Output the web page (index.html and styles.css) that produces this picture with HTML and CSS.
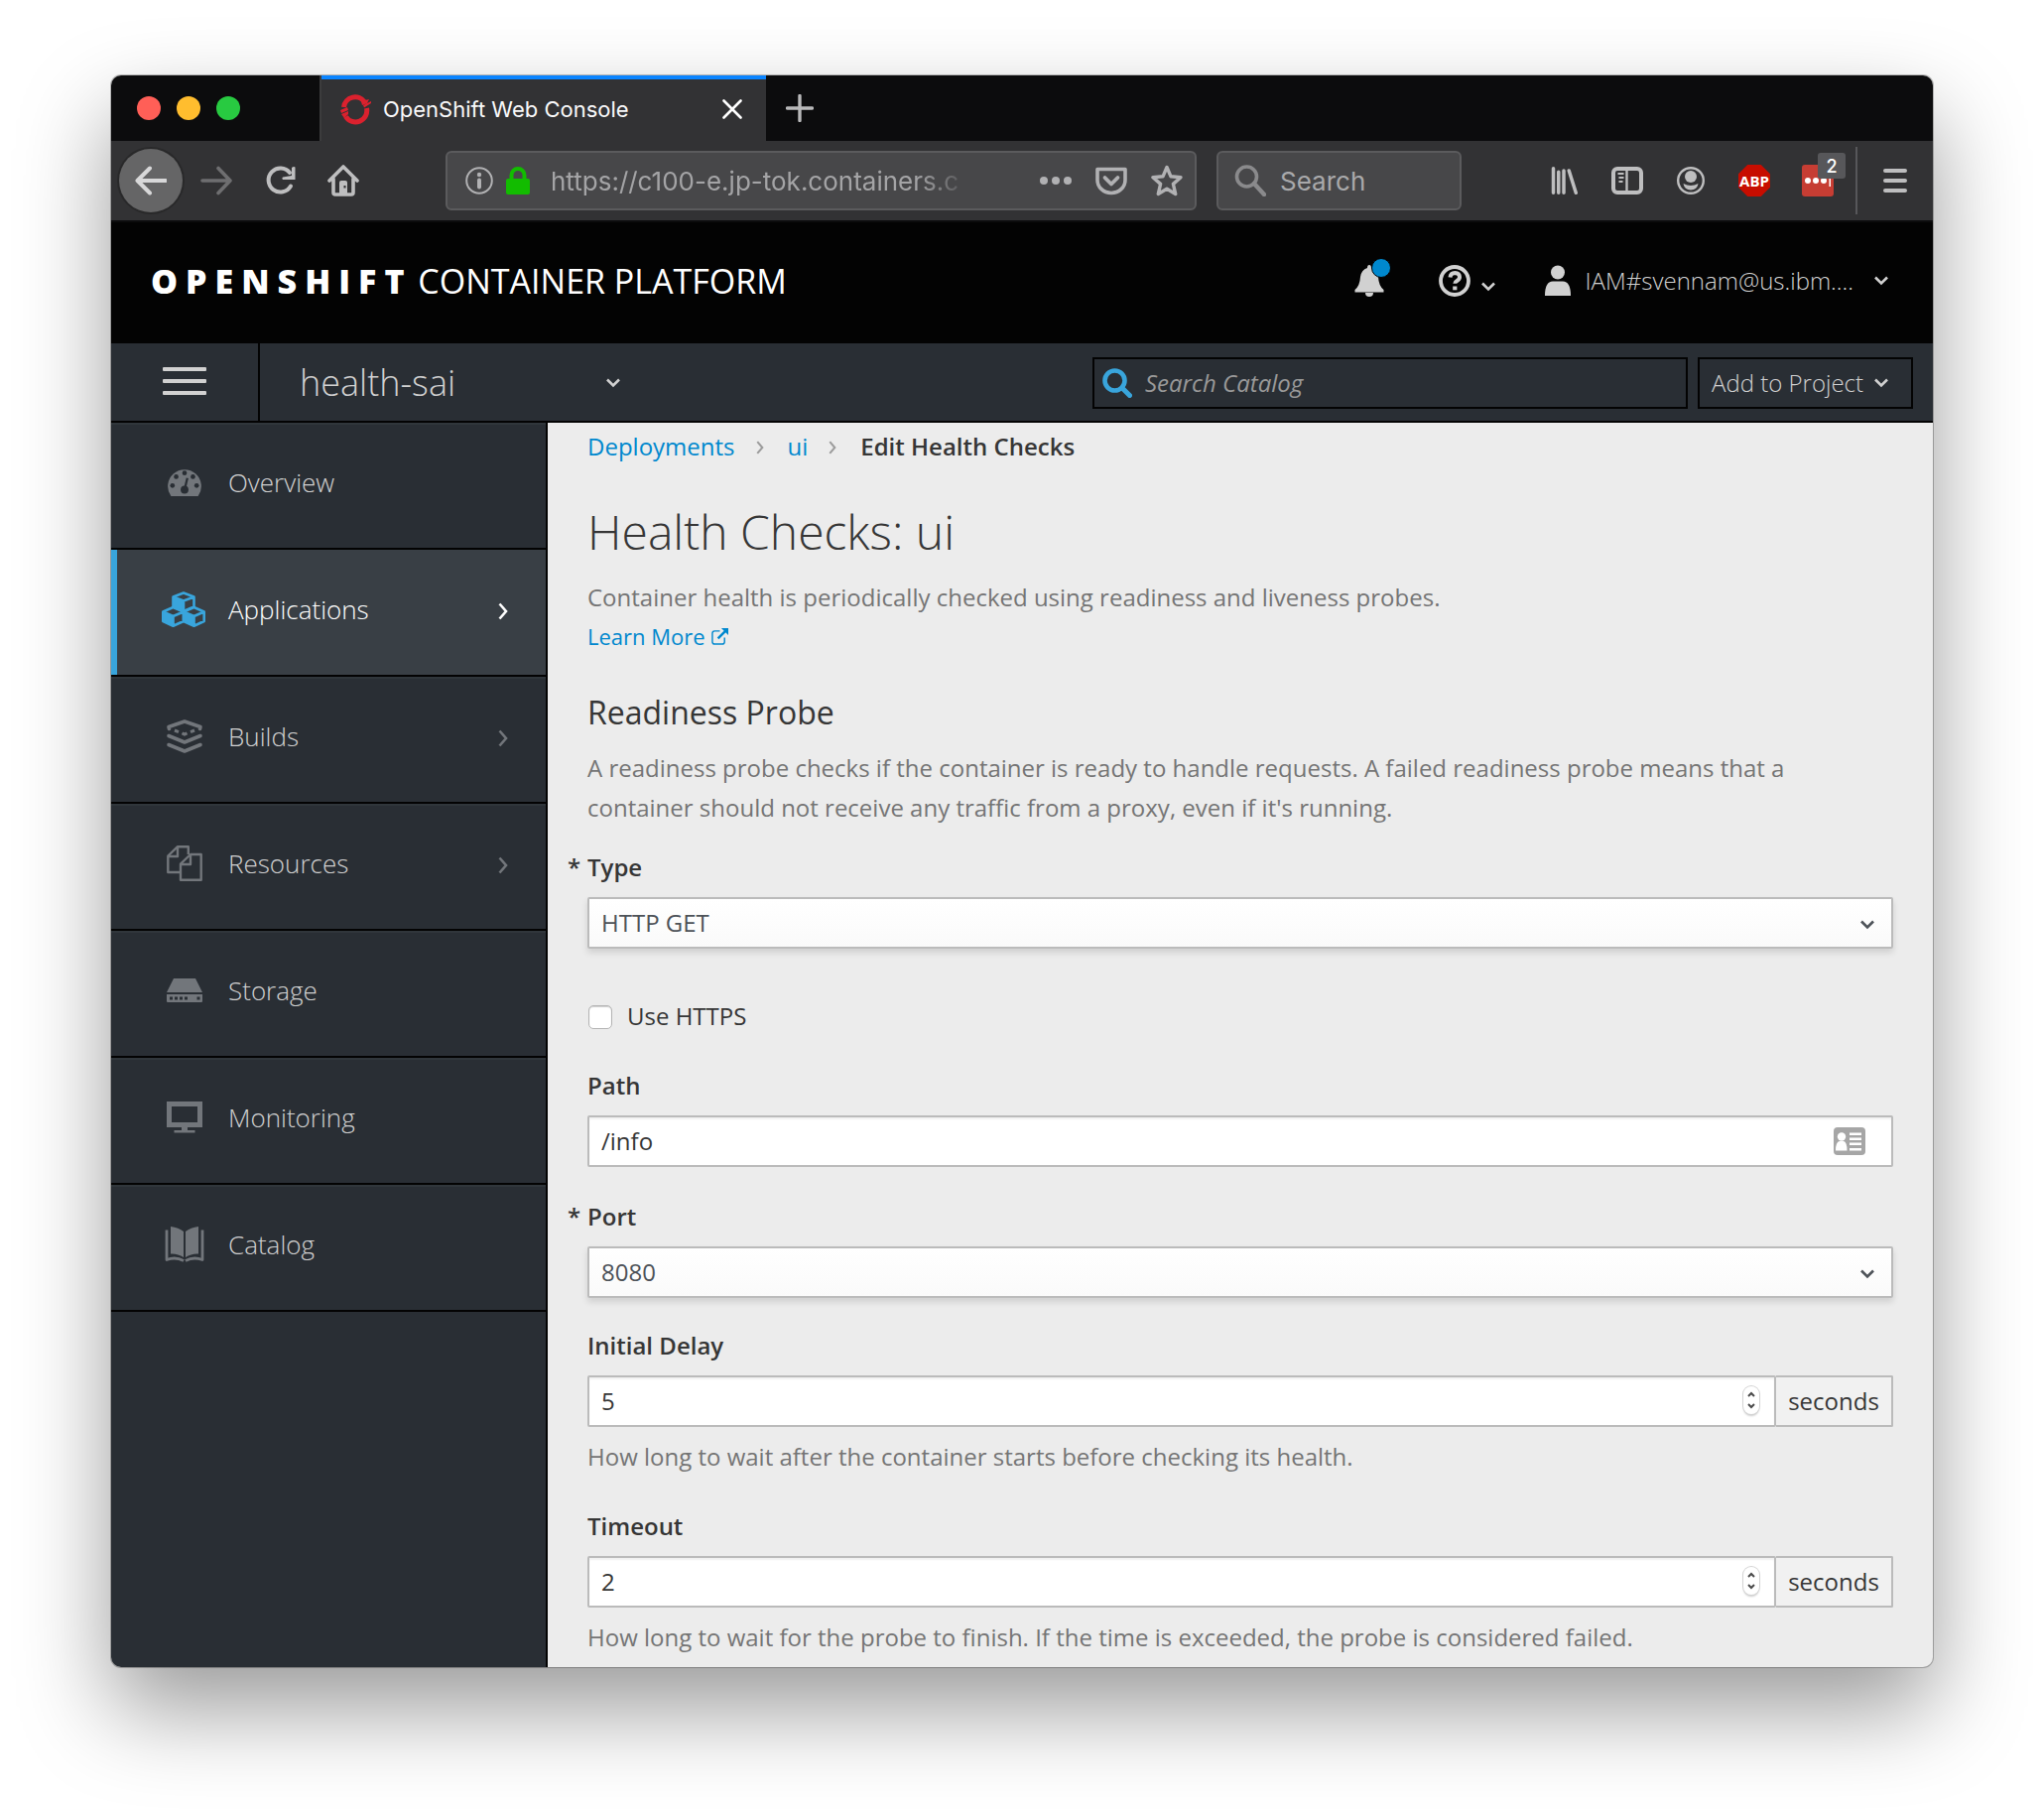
FILE: index.html
```html
<!DOCTYPE html>
<html lang="en">
<head>
<meta charset="utf-8">
<title>OpenShift Web Console</title>
<link rel="stylesheet" href="styles.css">
</head>
<body>
<svg class="sprite" aria-hidden="true">
  <symbol id="chev-down" viewBox="0 0 14 10"><path d="M1 1.500 7 7.500l6-6" fill="none" stroke="currentColor" stroke-width="2.600"/></symbol>
  <symbol id="chev-right" viewBox="0 0 10 18"><path d="M1.500 1.500 8 9l-6.500 7.500" fill="none" stroke="currentColor" stroke-width="2.600"/></symbol>
</svg>
<div class="window">
  <div class="tabbar">
    <div class="lights"><span class="light red"></span><span class="light yellow"></span><span class="light green"></span></div>
    <div class="tab">
      <svg class="i32" viewBox="0 0 32 32"><g fill="none" stroke="#db212e" stroke-width="5"><path d="M4.500 14A11.500 11.500 0 0 1 25.500 9"/><path d="M27.500 15A11.500 11.500 0 0 1 6.500 23.500"/></g><path d="M1 17l7-3 1 3-7 3zM24 12l8-4 0 2-7 4.500zM22 8l8-2-2 4-5 2zM2 21l7-3 0 3-4 4z" fill="#db212e"/></svg>
      <span class="tab-title">OpenShift Web Console</span>
      <button class="ico" aria-label="Close tab"><svg width="20" height="20" viewBox="0 0 20 20"><path d="M1.500 1.500l17 17M18.500 1.500l-17 17" stroke="#fff" stroke-width="2.600" stroke-linecap="round"/></svg></button>
    </div>
    <button class="ico newtab" aria-label="New tab"><svg width="28" height="28" viewBox="0 0 28 28"><path d="M14 1.500v25M1.500 14h25" stroke="#b9b9ba" stroke-width="3.400" stroke-linecap="round"/></svg></button>
  </div>

  <div class="toolbar">
    <button class="ico back" aria-label="Back"><svg class="i32" viewBox="0 0 32 32"><path d="M31 16H3M15 3.500 2.500 16 15 28.500" fill="none" stroke="#d8d8d9" stroke-width="4" stroke-linecap="round" stroke-linejoin="round"/></svg></button>
    <button class="ico" aria-label="Forward"><svg class="i32" viewBox="0 0 32 32"><path d="M2 16h28M18 3.500 30 16 18 28.500" fill="none" stroke="#6e6e70" stroke-width="3.600" stroke-linecap="round" stroke-linejoin="round"/></svg></button>
    <button class="ico" aria-label="Reload"><svg class="i32" viewBox="0 0 32 32"><path d="M27 21.500A12 12 0 1 1 26 8" fill="none" stroke="#bebebf" stroke-width="4" stroke-linecap="round"/><path d="M31.500 2.500V15H19q-1.500-1.500 0-2.500L28 11V3q2-1.500 3.500-.500z" fill="#bebebf"/></svg></button>
    <button class="ico" aria-label="Home"><svg class="i32" viewBox="0 0 32 32"><path d="M2 16 16 2l14 14M6 14v14q0 2 2 2h16q2 0 2-2V14" fill="none" stroke="#bebebf" stroke-width="3.600" stroke-linecap="round" stroke-linejoin="round"/><path d="M12 29V18q0-2 2-2h4q2 0 2 2v11z" fill="#bebebf"/><path d="M16.500 21h2v2.500h-2z" fill="#323234"/></svg></button>
    <div class="urlbar">
      <svg width="28" height="28" viewBox="0 0 28 28"><circle cx="14" cy="14" r="12.800" fill="none" stroke="#b1b1b3" stroke-width="2"/><circle cx="14" cy="8" r="2.200" fill="#b1b1b3"/><path d="M14 13.500v7" stroke="#b1b1b3" stroke-width="4" stroke-linecap="round"/></svg>
      <svg width="26" height="28" viewBox="0 0 26 28"><path d="M6.500 14V8.500a6.500 6.500 0 0 1 13 0V14" fill="none" stroke="#12bc00" stroke-width="4"/><rect x="1" y="12" width="24" height="16" rx="2" fill="#12bc00"/></svg>
      <input class="url" type="text" aria-label="Address" value="https://c100-e.jp-tok.containers.c">
      <svg class="i32" viewBox="0 0 32 32"><g fill="#b1b1b3"><circle cx="4" cy="16" r="4"/><circle cx="16" cy="16" r="4"/><circle cx="28" cy="16" r="4"/></g></svg>
      <svg class="i32" viewBox="0 0 32 32"><path d="M2 4.500h28v11a14 13 0 0 1-28 0z" fill="none" stroke="#b1b1b3" stroke-width="3.600" stroke-linejoin="round"/><path d="M9.500 13l6.500 6.500 6.500-6.500" fill="none" stroke="#b1b1b3" stroke-width="3.800" stroke-linecap="round" stroke-linejoin="round"/></svg>
      <svg class="i32" viewBox="0 0 32 32"><path d="M16 2.500l4 9.300 10 .9-7.600 6.700 2.300 10.100L16 24.300l-8.700 5.200 2.300-10.100L2 12.700l10-.9z" fill="none" stroke="#b1b1b3" stroke-width="3.400" stroke-linejoin="round"/></svg>
    </div>
    <div class="searchbar">
      <svg class="i32" viewBox="0 0 32 32"><circle cx="12.500" cy="12" r="10" fill="none" stroke="#8a8a8c" stroke-width="3.600"/><path d="M20 19l10 11" stroke="#8a8a8c" stroke-width="4.400" stroke-linecap="round"/></svg>
      <input class="search" type="text" aria-label="Search" placeholder="Search">
    </div>
    <div class="tools">
      <button class="ico" aria-label="Library"><svg class="i32" viewBox="0 0 32 32"><path d="M4 2v28M10 6v24M16 4.500V30M22 4.500 30 30" fill="none" stroke="#bebebf" stroke-width="4" stroke-linecap="round"/></svg></button>
      <button class="ico" aria-label="Sidebars"><svg class="i32" viewBox="0 0 32 28"><rect x="2" y="2" width="28" height="24" rx="4" fill="none" stroke="#bebebf" stroke-width="4"/><path d="M15.500 3v22" stroke="#bebebf" stroke-width="2.400"/><path d="M6.500 7h6M7.500 11h5M7.500 15h4" stroke="#bebebf" stroke-width="2"/></svg></button>
      <button class="ico" aria-label="Account"><svg class="i32" viewBox="0 0 32 32"><circle cx="16" cy="16" r="12.800" fill="none" stroke="#bebebf" stroke-width="2.400"/><circle cx="16" cy="12" r="6" fill="#bebebf"/><path d="M8.500 19q7.500 4 15 0-1 6-7.500 6.500Q9.500 25 8.500 19z" fill="#bebebf"/></svg></button>
      <button class="ico" aria-label="Adblock Plus"><span class="abp">ABP</span></button>
      <button class="ico lastpass" aria-label="LastPass"><svg class="i32" viewBox="0 0 32 32"><rect width="32" height="32" rx="3" fill="#c63d33"/><g fill="#fff"><circle cx="6" cy="16" r="3"/><circle cx="14" cy="16" r="3"/><circle cx="22" cy="16" r="3"/><path d="M27.500 12h1.500v10h-1.500z"/></g></svg><span class="badge">2</span></button>
    </div>
    <button class="ico menu" aria-label="Menu"><svg width="24" height="28" viewBox="0 0 24 28"><path d="M2 4h20M2 14h20M2 24h20" stroke="#bebebf" stroke-width="4" stroke-linecap="round"/></svg></button>
  </div>

  <header class="masthead">
    <div class="brand"><b>OPENSHIFT</b> <span>CONTAINER PLATFORM</span></div>
    <button class="ico bell" aria-label="Notifications"><svg width="30" height="32" viewBox="0 0 30 32"><path d="M15 0q2 0 2 3 6 2 7 9 .500 9 5.500 13v2.500H.5V25Q5.500 21 6 12q1-7 7-9 0-3 2-3z" fill="#d1d1d1"/><path d="M11 28h8a4 4 0 0 1-8 0z" fill="#d1d1d1"/></svg><span class="dot"></span></button>
    <button class="ico help" aria-label="Help"><svg class="i32" viewBox="0 0 32 32"><circle cx="16" cy="16" r="14" fill="none" stroke="#d1d1d1" stroke-width="3.800"/><path d="M11.500 12.500q.500-4.500 4.800-4.500 4.700.200 4.700 4.300 0 2.200-2.600 3.700-2.100 1.200-2.100 2.800" fill="none" stroke="#d1d1d1" stroke-width="4"/><path d="M14.200 21.500h4.200v3.800h-4.200z" fill="#d1d1d1"/></svg><svg class="chev low"><use href="#chev-down"/></svg></button>
    <button class="ico user"><svg width="26" height="32" viewBox="0 0 26 32"><circle cx="13" cy="7.500" r="7" fill="#d1d1d1"/><path d="M0 31q0-14.500 8-14.500h10q8 0 8 14.500z" fill="#d1d1d1"/></svg><span class="user-name">IAM#svennam@us.ibm....</span><svg class="chev"><use href="#chev-down"/></svg></button>
  </header>

  <div class="projectbar">
    <button class="ico navtoggle" aria-label="Toggle navigation"><span></span><span></span><span></span></button>
    <button class="ico project"><span>health-sai</span><svg class="chev"><use href="#chev-down"/></svg></button>
    <div class="catalog-search">
      <svg width="30" height="30" viewBox="0 0 30 30"><circle cx="12.500" cy="12.500" r="10" fill="none" stroke="#39a5dc" stroke-width="4.600"/><path d="M20 20l7.500 7.500" stroke="#39a5dc" stroke-width="5" stroke-linecap="round"/></svg>
      <input type="text" aria-label="Search Catalog" placeholder="Search Catalog">
    </div>
    <button class="ico add"><span>Add to Project</span><svg class="chev"><use href="#chev-down"/></svg></button>
  </div>

  <div class="body">
    <nav class="sidebar">
      <a class="nav" href="#overview"><svg class="nav-icon" viewBox="0 0 36 32"><path d="M3.500 30.500A18 18 0 1 1 32.500 30.500z" transform="translate(0 .500)" fill="currentColor"/><g fill="#292e34"><circle cx="5" cy="19.500" r="2.500"/><circle cx="9" cy="10" r="2.500"/><circle cx="18" cy="6" r="2.500"/><circle cx="27" cy="10" r="2.500"/><circle cx="31" cy="19.500" r="2.500"/><circle cx="18" cy="24" r="4.200"/></g><path d="M18 24l3-12.500" stroke="#292e34" stroke-width="2.400"/></svg><span>Overview</span></a>
      <a class="nav active" href="#applications"><svg class="nav-icon" viewBox="0 0 46 36"><g stroke="currentColor" stroke-width="2.600" stroke-linejoin="round" fill="none"><path d="M22 1.500l10.500 4v10L22 20l-10.500-4.500v-10zM11.500 5.500l10.500 4 10.500-4M22 9.500V20"/><path d="M11.500 16l10.500 4.500v9.500L11.500 34.700 1.300 30v-9.500zM1.300 20.500l10.200 4.500L22 20.500M11.500 25v9.500"/><path d="M32.500 16l10.200 4.500V30l-10.200 4.700L22 30v-9.500zM22 20.500 32.500 25l10.200-4.500M32.500 25v9.500"/></g><path d="M11.500 5.500l10.500 4V20l-10.500-4.500zM1.300 20.500l10.200 4.500v9.700L1.300 30zM22 20.500 32.500 25v9.700L22 30z" fill="currentColor"/></svg><span>Applications</span><svg class="more"><use href="#chev-right"/></svg></a>
      <a class="nav" href="#builds"><svg class="nav-icon" viewBox="0 0 36 36"><g fill="none" stroke="currentColor" stroke-width="3.600" stroke-linejoin="round" stroke-linecap="round"><path d="M2.500 10.500 2 8.500 18 3l16 5.500-.500 2"/><path d="M2 17.500 18 24l16-6.500"/><path d="M2 26.500 18 33l16-6.500"/></g><path d="M8 12l4 1.600M15.500 14.800 18 16l2.500-1.200M24 13.600l4-1.600" fill="none" stroke="currentColor" stroke-width="3"/></svg><span>Builds</span><svg class="more"><use href="#chev-right"/></svg></a>
      <a class="nav" href="#resources"><svg class="nav-icon" viewBox="0 0 36 36"><g fill="none" stroke="currentColor" stroke-width="2.400" stroke-linejoin="round"><path d="M13 27H1.300V10.500l9.500-9.200h11V9M1.300 11h9.700V1.300"/><path d="M24 9h10.700v25.700H14V18.500zM14 19h10V9"/></g></svg><span>Resources</span><svg class="more"><use href="#chev-right"/></svg></a>
      <a class="nav" href="#storage"><svg class="nav-icon" viewBox="0 0 36 26"><path d="M7 1h22l7 14H0zM0 17h36v7q0 1-1 1H1q-1 0-1-1z" fill="currentColor"/><path d="M3 19.500h3v3H3zM8 19.500h3v3H8zM13 19.500h3v3h-3zM18 19.500h3v3h-3zM30.500 19.500h3v3h-3z" fill="#292e34"/></svg><span>Storage</span></a>
      <a class="nav" href="#monitoring"><svg class="nav-icon" viewBox="0 0 36 32"><path d="M0 0h36v26H0zM5 5v16h26V5z" fill="currentColor" fill-rule="evenodd"/><path d="M15 26h6v3h7.500v2.500h-21V29H15z" fill="currentColor"/></svg><span>Monitoring</span></a>
      <a class="nav" href="#catalog"><svg class="nav-icon" viewBox="0 0 40 36"><path d="M6 0q8 1 13 5v26q-6-4-13-3.500zM34 0q-8 1-13 5v26q6-4 13-3.500z" fill="currentColor"/><path d="M2 3.500v30Q11 30 19 34.500M38 3.500v30Q29 30 21 34.500" fill="none" stroke="currentColor" stroke-width="2.800" stroke-linejoin="round"/></svg><span>Catalog</span></a>
    </nav>

    <main class="content">
      <ol class="crumbs">
        <li><a href="#deployments">Deployments</a><svg class="sep"><use href="#chev-right"/></svg></li>
        <li><a href="#ui">ui</a><svg class="sep"><use href="#chev-right"/></svg></li>
        <li><strong>Edit Health Checks</strong></li>
      </ol>
      <h1>Health Checks: ui</h1>
      <p class="muted">Container health is periodically checked using readiness and liveness probes.</p>
      <p class="learn"><a href="#learn">Learn More <svg width="17" height="17" viewBox="0 0 18 18"><path d="M9 3H3.500Q1 3 1 5.500v9Q1 17 3.500 17h8q2.500 0 2.500-2.500V10" fill="none" stroke="currentColor" stroke-width="1.500"/><path d="M7 11l8-8" stroke="currentColor" stroke-width="2.600"/><path d="M10.500 0H18v7.500z" fill="currentColor"/></svg></a></p>

      <h2>Readiness Probe</h2>
      <p class="muted">A readiness probe checks if the container is ready to handle requests. A failed readiness probe means that a container should not receive any traffic from a proxy, even if it's running.</p>

      <form>
        <div class="field field-type">
          <label class="required" for="type">Type</label>
          <div class="control"><select id="type"><option>HTTP GET</option></select><svg class="chev over"><use href="#chev-down"/></svg></div>
        </div>
        <label class="check"><input type="checkbox"><span>Use HTTPS</span></label>
        <div class="field">
          <label for="path">Path</label>
          <div class="control"><input id="path" type="text" value="/info"><svg class="card" viewBox="0 0 32 28"><rect width="32" height="28" rx="4" fill="#a6a6a6"/><g fill="#fff"><circle cx="8" cy="9.500" r="4.200"/><path d="M2 23.500q0-9 4-9.500h4q3.500.500 3.500 9.500zM16 5.500h12v2.500H16zM16 10.500h12v2.500H16zM16 15.500h12V18H16zM16 21h12v2.500H16z"/></g></svg></div>
        </div>
        <div class="field field-port">
          <label class="required" for="port">Port</label>
          <div class="control"><select id="port"><option>8080</option></select><svg class="chev over"><use href="#chev-down"/></svg></div>
        </div>
        <div class="field">
          <label for="delay">Initial Delay</label>
          <div class="control"><input id="delay" type="number" value="5"><svg class="spin" viewBox="0 0 16 28"><path d="M5 10l3-3 3 3M5 18l3 3 3-3" fill="none" stroke="#4a4a4a" stroke-width="2"/></svg><span class="addon">seconds</span></div>
          <p class="muted">How long to wait after the container starts before checking its health.</p>
        </div>
        <div class="field">
          <label for="timeout">Timeout</label>
          <div class="control"><input id="timeout" type="number" value="2"><svg class="spin" viewBox="0 0 16 28"><path d="M5 10l3-3 3 3M5 18l3 3 3-3" fill="none" stroke="#4a4a4a" stroke-width="2"/></svg><span class="addon">seconds</span></div>
          <p class="muted">How long to wait for the probe to finish. If the time is exceeded, the probe is considered failed.</p>
        </div>
      </form>
    </main>
  </div>
</div>
</body>
</html>
```
FILE: styles.css
```css
* { box-sizing: border-box; }

body {
  margin: 0;
  min-height: 100vh;
  padding: 76px 112px 148px;
  display: flex;
  background: #fff;
  color: #363636;
  font: 24px/40px "Open Sans", "Noto Sans", sans-serif;
}

a { color: #0088ce; text-decoration: none; }
p, h1, h2, ol { margin: 0; padding: 0; }
svg { display: block; flex: none; }
input, select, button { font: inherit; color: inherit; }
.sprite { display: none; }

.ico {
  display: flex;
  align-items: center;
  justify-content: center;
  flex: none;
  padding: 0;
  border: 0;
  background: none;
}
.i32 { width: 32px; height: 32px; }
.chev { width: 14px; height: 10px; }

.window {
  flex: 1;
  min-width: 0;
  display: flex;
  flex-direction: column;
  border-radius: 10px;
  overflow: hidden;
  background: #ececec;
  box-shadow: 0 0 0 1px rgba(0, 0, 0, .25), 0 42px 92px rgba(0, 0, 0, .4);
}

/* Browser chrome */
.tabbar {
  display: flex;
  height: 66px;
  background: #0c0c0d;
  font-family: Inter, "Liberation Sans", sans-serif;
}
.lights {
  width: 210px;
  padding-left: 26px;
  display: flex;
  align-items: center;
  gap: 16px;
}
.light { width: 24px; height: 24px; border-radius: 50%; }
.red { background: #ff5f57; }
.yellow { background: #ffbd2e; }
.green { background: #28ca41; }
.tab {
  width: 450px;
  display: flex;
  align-items: center;
  padding: 2px 24px 0 18px;
  gap: 12px;
  border-left: 2px solid #3c3c3d;
  background: linear-gradient(#0a84ff 4px, #323234 4px);
  color: #f9f9fa;
  font-size: 22px;
}
.tab-title { flex: 1; white-space: nowrap; }
.newtab { width: 68px; }

.toolbar {
  display: flex;
  align-items: center;
  gap: 32px;
  height: 82px;
  padding: 0 22px 0 8px;
  border-bottom: 2px solid #0c0c0d;
  background: #323234;
  font: 26px/40px Inter, "Liberation Sans", sans-serif;
}
.back {
  width: 64px;
  height: 64px;
  margin-right: -14px;
  border-radius: 50%;
  background: #656566;
  box-shadow: 0 0 0 2px #29292a;
}
.urlbar, .searchbar {
  display: flex;
  align-items: center;
  height: 60px;
  border: 2px solid #5b5b5d;
  border-radius: 6px;
  background: #474749;
}
.urlbar { flex: 1; min-width: 0; margin-left: 55px; padding: 0 12px 0 18px; gap: 12px; }
.url {
  flex: 1;
  min-width: 0;
  margin: 0 56px 0 8px;
  padding: 2px 0 0;
  border: 0;
  background: none;
  color: #a4a4a6;
  -webkit-mask-image: linear-gradient(to left, transparent, #000 56px);
  mask-image: linear-gradient(to left, transparent, #000 56px);
}
.urlbar .i32 + .i32 { margin-left: 12px; }
.searchbar { width: 247px; margin-left: -12px; padding-left: 16px; gap: 14px; }
.search { flex: 1; min-width: 0; padding: 2px 0 0; border: 0; background: none; }
.search::placeholder { color: #a9a9ab; opacity: 1; }
.tools {
  display: flex;
  align-items: center;
  gap: 32px;
  height: 68px;
  margin: 0 -10px 0 55px;
  padding-right: 22px;
  border-right: 2px solid #57575a;
}
.tools .ico:nth-child(-n+2) .i32 { height: 28px; }
.abp {
  width: 32px;
  height: 32px;
  background: #c70d00;
  color: #fff;
  font: 700 15px/32px "Open Sans", sans-serif;
  text-align: center;
  clip-path: polygon(29% 0, 71% 0, 100% 29%, 100% 71%, 71% 100%, 29% 100%, 0 71%, 0 29%);
}
.lastpass { position: relative; }
.badge {
  position: absolute;
  top: -12px;
  left: 16px;
  width: 28px;
  height: 26px;
  border-radius: 3px;
  background: #57575a;
  color: #fff;
  font-size: 18px;
  font-weight: 500;
  line-height: 28px;
  text-align: center;
}
.menu { width: 32px; }

/* Console header */
.masthead {
  display: flex;
  align-items: center;
  height: 122px;
  padding: 0 45px 4px 40px;
  background: #030303;
  color: #d1d1d1;
}
.brand { flex: 1; color: #fff; font-size: 34px; font-weight: 400; white-space: nowrap; }
.brand b { margin-right: -3px; font-weight: 800; letter-spacing: 8px; }
.bell { position: relative; margin-right: 55px; }
.dot {
  position: absolute;
  top: -7px;
  left: 17px;
  width: 20px;
  height: 20px;
  border: 1px solid #030303;
  border-radius: 50%;
  background: #0088ce;
}
.help { gap: 11px; margin-right: 50px; }
.low { margin-top: 12px; }
.user { gap: 15px; font-weight: 300; }
.user-name { margin-right: 6px; }

.projectbar {
  display: flex;
  align-items: center;
  height: 80px;
  padding-right: 20px;
  border-bottom: 2px solid #030303;
  background: #292e34;
  color: #d1d1d1;
}
.projectbar > * + * { margin-top: 2px; }
.navtoggle {
  flex-direction: column;
  gap: 8px;
  width: 150px;
  height: 78px;
  padding-bottom: 2px;
  border-right: 2px solid #030303;
}
.navtoggle span { width: 44px; height: 4px; border-radius: 1px; background: #d1d1d1; }
.project {
  justify-content: space-between;
  width: 396px;
  padding: 0 33px 0 40px;
  font-size: 36px;
  font-weight: 300;
}
.catalog-search {
  display: flex;
  align-items: center;
  gap: 13px;
  flex: 0 1 600px;
  height: 52px;
  margin-left: auto;
  padding-left: 8px;
  border: 2px solid #030303;
}
.catalog-search input { flex: 1; min-width: 0; padding: 0; border: 0; background: none; }
.catalog-search input::placeholder { color: #999; font-style: italic; opacity: 1; }
.add {
  gap: 11px;
  width: 217px;
  height: 52px;
  margin-left: 10px;
  padding-right: 11px;
  border: 2px solid #030303;
  font-weight: 300;
}

/* Navigation */
.body { flex: 1; display: flex; }
.sidebar { flex: none; width: 440px; border-right: 2px solid #030303; background: #292e34; }
.nav {
  display: flex;
  align-items: center;
  height: 128px;
  padding: 0 38px 6px 48px;
  border-bottom: 2px solid #030303;
  box-shadow: inset 0 2px #30363b;
  color: #d1d1d1;
  font-size: 26px;
  font-weight: 300;
}
.nav span { flex: 1; padding-left: 18px; }
.nav-icon { width: 52px; height: 36px; color: #72767b; }
.nav[href="#overview"] .nav-icon { height: 30px; }
.nav[href="#storage"] .nav-icon { height: 26px; }
.nav[href="#monitoring"] .nav-icon { height: 32px; }
.more { width: 10px; height: 18px; margin-top: 4px; color: #72767b; }
.active { box-shadow: inset 6px 0 #39a5dc; background: #393f45; color: #fff; }
.active .nav-icon { color: #39a5dc; }
.active .more { color: #fff; }

/* Page */
.content { flex: 1; min-width: 0; padding: 4px 40px 4px; }
.crumbs { display: flex; list-style: none; }
.crumbs li { display: flex; align-items: center; }
.sep { width: 8px; height: 14px; margin: 2px 24px 0 21px; color: #9c9c9c; }
strong, .field label { font-weight: 600; }
h1 { margin-top: 38px; font-size: 48px; font-weight: 300; line-height: 56px; }
h1 + .muted { margin-top: 18px; }
.muted { color: #757575; }
.learn { font-size: 22px; line-height: 38px; }
.learn a { display: inline-flex; align-items: center; gap: 6px; }
h2 { margin: 40px 0 18px; font-size: 32px; font-weight: 400; line-height: 36px; }

.field { margin-top: 30px; }
.field-type { margin: 20px 0 48px; }
.field-port + .field { margin-top: 28px; }
.field label { position: relative; display: block; }
.required::before { content: "*"; position: absolute; left: -20px; }
.control { position: relative; display: flex; margin: 10px 0; }
.control:last-child { margin-bottom: 0; }
.control input, .control select {
  flex: 1;
  min-width: 0;
  height: 52px;
  margin: 0;
  padding: 0 12px 2px;
  border: 2px solid #bbb;
  border-radius: 2px;
  background: #fff;
  box-shadow: inset 0 2px 2px rgba(3, 3, 3, .06);
  appearance: none;
}
.control select {
  padding-bottom: 0;
  background: linear-gradient(#fff, #fafafa);
  box-shadow: 0 4px 6px rgba(3, 3, 3, .12);
  color: #4d5258;
}
.control input[type="number"] { appearance: textfield; }
.over { position: absolute; right: 19px; top: 23px; color: #4d5258; }
.card { position: absolute; right: 28px; top: 12px; width: 32px; height: 28px; }
.spin {
  position: absolute;
  right: 135px;
  top: 11px;
  width: 16px;
  height: 28px;
  border-radius: 8px;
  background: #fff;
  box-shadow: 0 0 0 1px #d4d4d4, 0 2px 2px rgba(0, 0, 0, .2);
}
.addon {
  display: flex;
  align-items: center;
  justify-content: center;
  width: 118px;
  border: 2px solid #bbb;
  border-left: 0;
  border-radius: 0 2px 2px 0;
  background: #f1f1f1;
}
.check { display: flex; align-items: center; gap: 15px; width: max-content; }
.check input {
  appearance: none;
  width: 24px;
  height: 24px;
  margin: 2px 0 0 1px;
  border: 1px solid #b4b4b4;
  border-radius: 5px;
  background: #fff;
  box-shadow: inset 0 1px 1px rgba(0, 0, 0, .2);
}
```
